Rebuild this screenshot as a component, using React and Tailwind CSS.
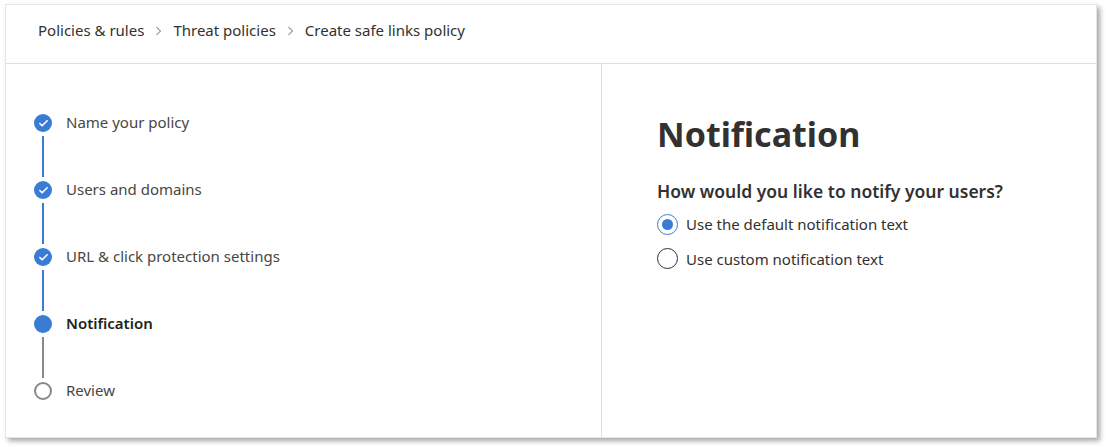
import { Check } from "lucide-react";

const steps = [
  { label: "Name your policy", state: "done" },
  { label: "Users and domains", state: "done" },
  { label: "URL & click protection settings", state: "done" },
  { label: "Notification", state: "current" },
  { label: "Review", state: "todo" },
];

const font = { fontFamily: '"Segoe UI", "Noto Sans", "Open Sans", sans-serif' };

function StepDot({ state }) {
  if (state === "done") {
    return (
      <div className="w-[18px] h-[18px] rounded-full bg-[#3a7bd5] flex items-center justify-center">
        <Check size={11} strokeWidth={3.5} className="text-white" />
      </div>
    );
  }
  if (state === "current") {
    return <div className="w-[18px] h-[18px] rounded-full bg-[#3a7bd5]" />;
  }
  return <div className="w-[18px] h-[18px] rounded-full border-2 border-[#8a8886] bg-white" />;
}

const App = () => {
  return (
    <div className="w-[1106px] h-[447px] bg-white pt-[4px] pl-[5px]" style={font}>
      <div className="w-[1092px] h-[434px] bg-white border border-[#e6e6e6] shadow-[3px_3px_5px_rgba(0,0,0,0.35)] flex flex-col">
        {/* Breadcrumb */}
        <div className="h-[59px] border-b border-[#e1dfdd] flex items-center pl-[32px] pb-[7px] text-[15px] text-[#323130] gap-[11px]">
          <span>Policies &amp; rules</span>
          <Chevron />
          <span>Threat policies</span>
          <Chevron />
          <span>Create safe links policy</span>
        </div>

        <div className="flex flex-1">
          {/* Steps */}
          <div className="w-[596px] border-r border-[#e1dfdd] pl-[28px] pt-[50px]">
            {steps.map((s, i) => {
              const next = steps[i + 1];
              const lineColor = next && next.state !== "todo" ? "bg-[#3a7bd5]" : "bg-[#8a8886]";
              return (
                <div key={s.label} className="flex">
                  <div className="flex flex-col items-center w-[18px]">
                    <StepDot state={s.state} />
                    {next && <div className={`w-[2px] h-[41px] my-[4px] ${lineColor}`} />}
                  </div>
                  <div
                    className={`ml-[14px] text-[15px] leading-[18px] -mt-[1px] ${
                      s.state === "current" ? "font-semibold text-[#201f1e]" : "text-[#484644]"
                    }`}
                  >
                    {s.label}
                  </div>
                </div>
              );
            })}
          </div>

          {/* Content */}
          <div className="flex-1 pl-[55px] pt-[47px]">
            <h1 className="text-[34px] leading-[46px] font-bold text-[#323130]">Notification</h1>
            <div className="mt-[22px] text-[17.5px] font-semibold text-[#323130] leading-[24px]">
              How would you like to notify your users?
            </div>
            <div className="mt-[10px] flex flex-col gap-[12px]">
              <label className="flex items-center gap-[8px] text-[15px] text-[#323130]">
                <span className="w-[21px] h-[21px] rounded-full border border-[#3a7bd5] flex items-center justify-center">
                  <span className="w-[11px] h-[11px] rounded-full bg-[#3a7bd5]" />
                </span>
                Use the default notification text
              </label>
              <label className="flex items-center gap-[8px] text-[15px] text-[#323130]">
                <span className="w-[21px] h-[21px] rounded-full border border-[#323130]" />
                Use custom notification text
              </label>
            </div>
          </div>
        </div>
      </div>
    </div>
  );
};

function Chevron() {
  return (
    <svg width="7" height="12" viewBox="0 0 7 12" className="text-[#605e5c]">
      <path d="M1.5 2l4 4-4 4" fill="none" stroke="currentColor" strokeWidth="1" />
    </svg>
  );
}

export default App;
